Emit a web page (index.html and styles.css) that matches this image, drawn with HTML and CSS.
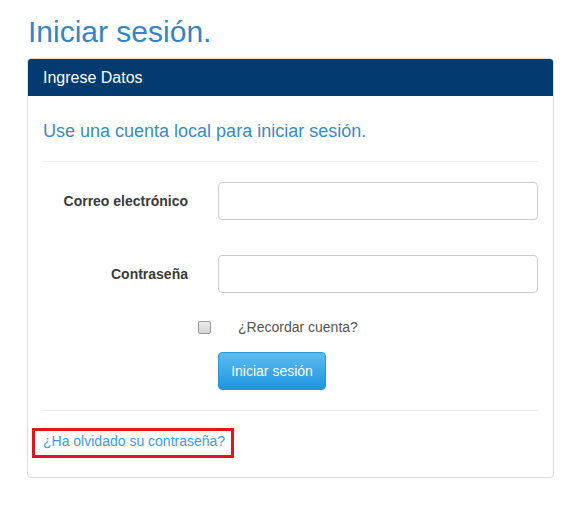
FILE: index.html
```html
<!DOCTYPE html>
<html lang="es">
<head>
<meta charset="utf-8">
<title>Iniciar sesión</title>
<link rel="stylesheet" href="styles.css">
</head>
<body>
<div class="container">
  <h2 class="page-title">Iniciar sesión.</h2>
  <div class="panel">
    <div class="panel-heading"><h3 class="panel-title">Ingrese Datos</h3></div>
    <div class="panel-body">
      <h4 class="subtitle">Use una cuenta local para iniciar sesión.</h4>
      <hr class="sep">
      <form class="form">
        <div class="form-row">
          <label class="field-label" for="email">Correo electrónico</label>
          <input class="field-input" id="email" type="text">
        </div>
        <div class="form-row">
          <label class="field-label" for="pass">Contraseña</label>
          <input class="field-input" id="pass" type="password">
        </div>
        <div class="check-row">
          <input class="check" type="checkbox" id="remember">
          <label class="check-label" for="remember">¿Recordar cuenta?</label>
        </div>
        <div class="btn-row">
          <button class="btn" type="button">Iniciar sesión</button>
        </div>
      </form>
      <hr class="sep sep-bottom">
      <p class="forgot"><a class="forgot-link" href="#">¿Ha olvidado su contraseña?</a><span class="highlight"></span></p>
    </div>
  </div>
</div>
</body>
</html>
```
FILE: styles.css
```css
* { box-sizing: border-box; }
html, body {
  margin: 0;
  background: #fff;
  font-family: "Liberation Sans", Arial, sans-serif;
  font-size: 14px;
  color: #333;
}
.container {
  padding: 15px 0 0 27px;
  width: 554px;
}
.page-title {
  margin: 0 0 10px 1px;
  font-size: 30px;
  line-height: 33px;
  font-weight: normal;
  color: #3585c3;
}
.panel {
  border: 1px solid #ddd;
  border-radius: 4px;
  background: #fff;
  width: 527px;
}
.panel-heading {
  background: #033b70;
  padding: 10px 15px;
  border-radius: 3px 3px 0 0;
}
.panel-title {
  margin: 0;
  font-size: 16px;
  line-height: 17px;
  font-weight: normal;
  color: #fff;
}
.panel-body {
  padding: 15px;
}
.subtitle {
  margin: 10px 0 0;
  font-size: 18px;
  line-height: 20px;
  font-weight: normal;
  color: #3b8ac6;
}
.sep {
  border: 0;
  border-top: 1px solid #eee;
  margin: 20px 0;
  height: 0;
}
.form-row {
  display: grid;
  grid-template-columns: 145px 320px;
  column-gap: 30px;
  align-items: center;
  margin-bottom: 35px;
}
.form-row + .form-row { margin-bottom: 20px; }
.field-label {
  text-align: right;
  font-weight: bold;
  font-size: 14px;
  color: #3a3a3a;
}
.field-input {
  height: 38px;
  width: 320px;
  border: 1px solid #ccc;
  border-radius: 4px;
  background: #fff;
  padding: 6px 12px;
  font: inherit;
}
.check-row {
  display: flex;
  align-items: center;
  padding-left: 155px;
  height: 28px;
}
.check {
  appearance: none;
  -webkit-appearance: none;
  width: 13px;
  height: 13px;
  margin: 0 27px 0 0;
  border: 1px solid #9a9a9a;
  border-radius: 2px;
  background: linear-gradient(#eaeaea, #d6d6d6);
}
.check-label {
  color: #555;
  font-size: 14px;
  line-height: 20px;
}
.btn-row {
  padding-left: 175px;
  margin-top: 11px;
}
.btn {
  width: 108px;
  height: 38px;
  border: 1px solid #2a95d8;
  border-radius: 4px;
  background: linear-gradient(#5cbcef, #1e95e0);
  color: #fff;
  font-family: inherit;
  font-size: 14px;
  padding: 0;
}
.sep-bottom { margin-bottom: 20px; }
.forgot {
  position: relative;
  margin: 0 0 11px;
  line-height: 20px;
}
.forgot-link {
  color: #3d9be8;
  text-decoration: none;
  font-size: 14px;
}
.highlight {
  position: absolute;
  left: -11px;
  top: -3px;
  width: 202px;
  height: 30px;
  border: 3px solid #e3141d;
  pointer-events: none;
}
```
